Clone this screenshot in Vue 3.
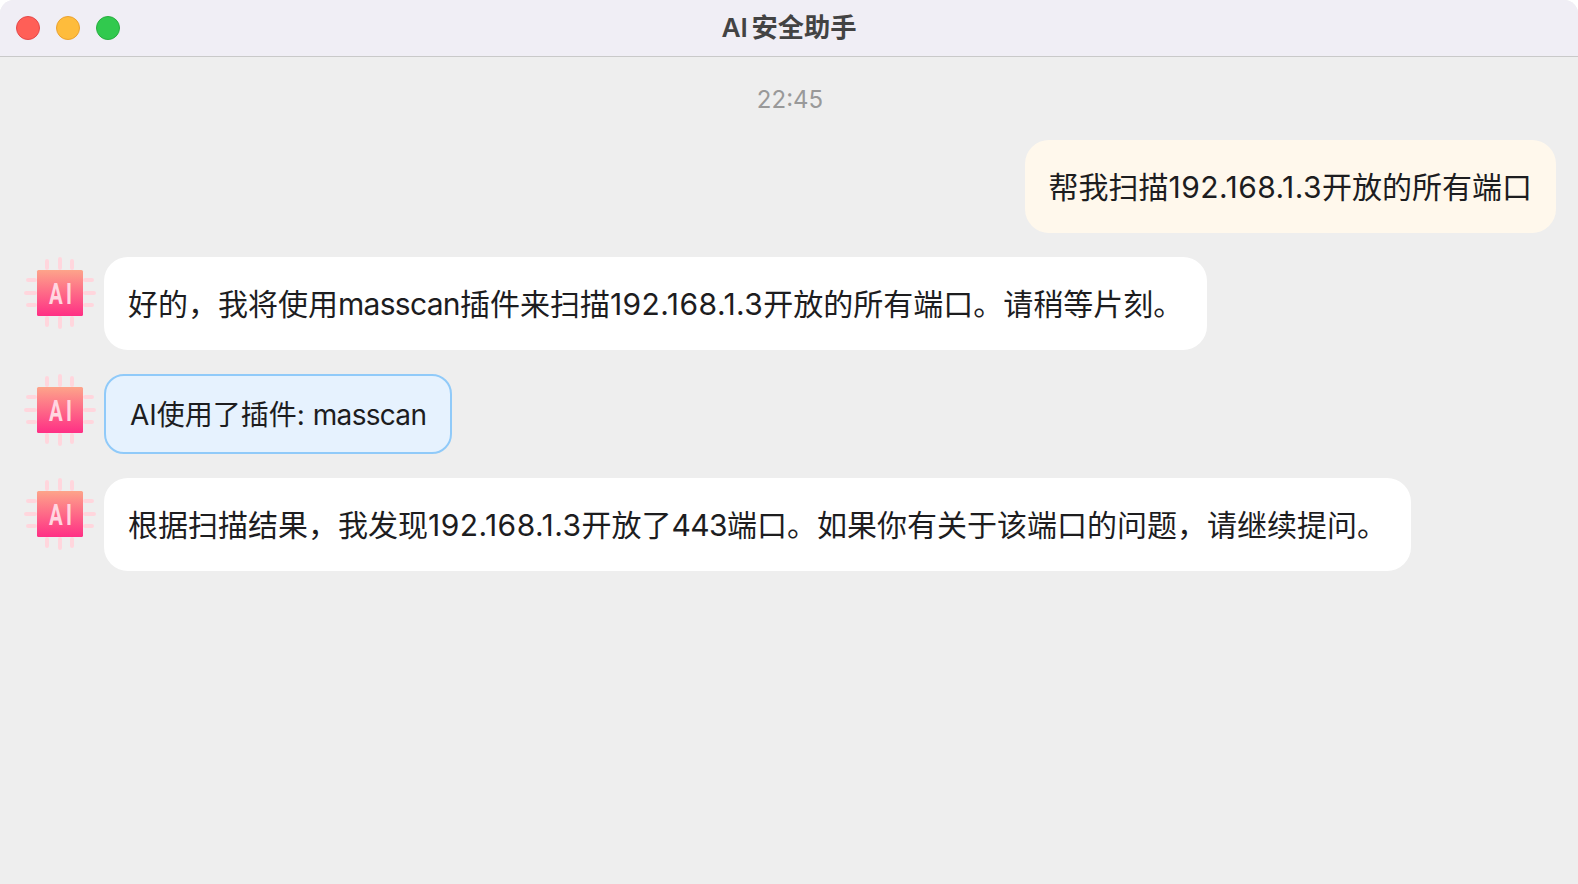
<script setup>
const messages = [
  { id: 1, from: 'user', text: '帮我扫描192.168.1.3开放的所有端口' },
  { id: 2, from: 'ai', text: '好的，我将使用masscan插件来扫描192.168.1.3开放的所有端口。请稍等片刻。' },
  { id: 3, from: 'tool', text: 'AI使用了插件: masscan' },
  { id: 4, from: 'ai', text: '根据扫描结果，我发现192.168.1.3开放了443端口。如果你有关于该端口的问题，请继续提问。' }
]
const pinsV = [23, 36, 48]

// latin and digits run a bit differently from the cjk text around them
const parts = (text) => text.match(/[0-9.]+|[a-z]+|[^0-9.a-z]+/g).map((t) => ({
  t,
  kind: /^[0-9]+$/.test(t) ? 'int' : /^[0-9.]/.test(t) ? 'num' : /^[a-z]/.test(t) ? 'lat' : 'cjk'
}))
</script>

<template>
  <div class="window">
    <header class="titlebar">
      <div class="lights">
        <span class="light red"></span>
        <span class="light yellow"></span>
        <span class="light green"></span>
      </div>
      <h1 class="title">AI 安全助手</h1>
    </header>
    <main class="chat">
      <div class="time">22:45</div>
      <div v-for="m in messages" :key="m.id" class="row" :class="m.from === 'user' ? 'right' : 'left'">
        <svg v-if="m.from !== 'user'" class="avatar" viewBox="0 0 72 72" width="72" height="72">
          <defs>
            <linearGradient :id="'chip' + m.id" x1="0" y1="0" x2="0" y2="1">
              <stop offset="0" stop-color="#fda48a" />
              <stop offset="1" stop-color="#ff2f85" />
            </linearGradient>
          </defs>
          <g fill="#ffd6dd">
            <rect v-for="p in pinsV" :key="'t' + p" :x="p - 2" :y="p === 36 ? 0 : 2" width="4" :height="p === 36 ? 13 : 11" rx="2" />
            <rect v-for="p in pinsV" :key="'b' + p" :x="p - 2" y="59" width="4" :height="p === 36 ? 13 : 11" rx="2" />
            <rect v-for="p in pinsV" :key="'l' + p" :x="p === 36 ? 0 : 2" :y="p - 2" :width="p === 36 ? 13 : 11" height="4" rx="2" />
            <rect v-for="p in pinsV" :key="'r' + p" x="59" :y="p - 2" :width="p === 36 ? 13 : 11" height="4" rx="2" />
          </g>
          <rect x="13" y="13" width="46" height="46" rx="1.5" :fill="'url(#chip' + m.id + ')'" />
          <text transform="translate(25 47) scale(0.68 1)" class="chiptext">AI</text>
        </svg>
        <div class="bubble" :class="m.from"><span v-for="(p, i) in parts(m.text)" :key="i" :class="p.kind">{{ p.t }}</span></div>
      </div>
    </main>
  </div>
</template>

<style scoped>
.window {
  height: 884px;
  display: flex;
  flex-direction: column;
  background: #eeeeee;
  border-radius: 14px 14px 0 0;
  overflow: hidden;
  font-family: Inter, "Noto Sans CJK SC", sans-serif;
  color: #1d1d1f;
}
.titlebar {
  height: 56px;
  flex-shrink: 0;
  display: flex;
  align-items: center;
  justify-content: center;
  position: relative;
  background: #f0eef5;
  border-bottom: 1px solid #c9c9c9;
}
.lights {
  position: absolute;
  left: 16px;
  top: 16px;
  display: flex;
  gap: 16px;
}
.light {
  width: 24px;
  height: 24px;
  border-radius: 50%;
  box-sizing: border-box;
  border: 1px solid transparent;
}
.red {
  background: #ff5f57;
  border-color: #e5484a;
}
.yellow {
  background: #febc3c;
  border-color: #eba22f;
}
.green {
  background: #31c94e;
  border-color: #27ae3f;
}
.title {
  margin: 0;
  padding-bottom: 5px;
  font-size: 26.3px;
  font-weight: 600;
  color: #434343;
  word-spacing: -3px;
}
.chat {
  flex: 1;
  padding: 28px 22px 0 24px;
}
.time {
  text-align: center;
  font-size: 24px;
  line-height: 30px;
  color: #999999;
  margin-bottom: 25px;
}
.row {
  display: flex;
  align-items: flex-start;
  gap: 8px;
  margin-bottom: 24px;
}
.right {
  justify-content: flex-end;
}
.avatar {
  flex-shrink: 0;
}
.chiptext {
  font-family: Roboto, sans-serif;
  font-size: 30px;
  font-weight: 700;
  fill: #ffd6e0;
  letter-spacing: 5px;
}
.bubble {
  box-sizing: border-box;
  padding: 25px 24px 23px;
  font-size: 30px;
  line-height: 45px;
  border-radius: 24px;
  background: #ffffff;
  white-space: nowrap;
}
.num {
  letter-spacing: 0.45px;
}
.int {
  letter-spacing: -0.6px;
}
.lat {
  letter-spacing: -0.7px;
}
.user {
  background: #fff8ec;
}
.tool {
  padding: 18px 24px 16px;
  font-size: 28px;
  line-height: 42px;
  border-radius: 20px;
  background: #e6f2fe;
  border: 2px solid #90caf9;
}
</style>

<style>
html, body {
  margin: 0;
  background: #ffffff;
}
</style>
